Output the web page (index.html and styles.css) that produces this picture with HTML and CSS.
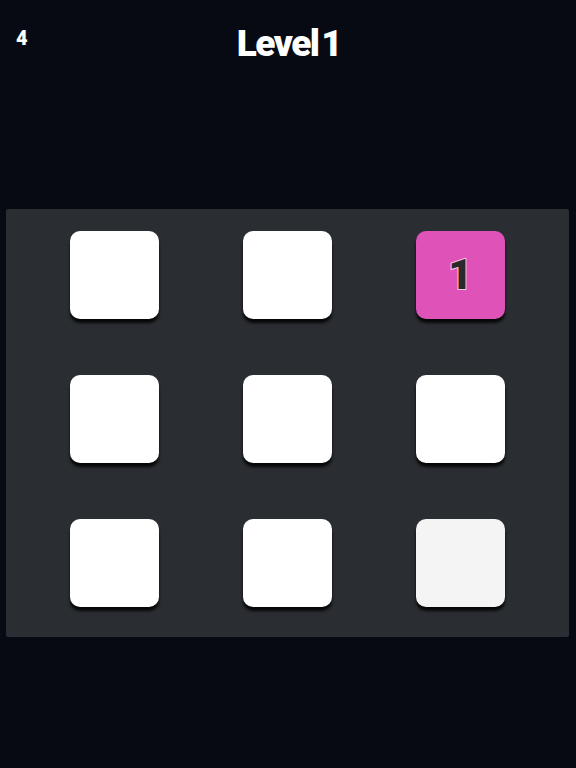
FILE: index.html
```html
<!DOCTYPE html>
<html lang="en">
<head>
    <meta charset="UTF-8">
    <meta name="viewport" content="width=device-width, initial-scale=1.0">
    <title>Level 1</title>
    <link rel="stylesheet" href="styles.css">
</head>
<body>

<div class="top-bar">
    <div class="moves">4</div>
    <h1 class="level-title">Level 1</h1>
</div>

<div class="board">
    <div class="tile"></div>
    <div class="tile"></div>
    <div class="tile tile-active"><span>1</span></div>
    <div class="tile"></div>
    <div class="tile"></div>
    <div class="tile"></div>
    <div class="tile"></div>
    <div class="tile"></div>
    <div class="tile tile-dim"></div>
</div>

</body>
</html>
```

FILE: styles.css
```css
body {
    background-color: #070a12;
    color: #fff;
    font-family: Roboto, "Liberation Sans", sans-serif;
    margin: 0;
    padding: 0;
    width: 576px;
    height: 768px;
    overflow: hidden;
}

.top-bar {
    position: relative;
    height: 209px;
}

.moves {
    position: absolute;
    top: 26px;
    left: 16px;
    font-size: 20px;
    font-weight: 900;
}

.level-title {
    margin: 0;
    padding-top: 22px;
    padding-left: 2px;
    text-align: center;
    font-size: 37px;
    font-weight: 900;
    letter-spacing: -1.5px;
    word-spacing: -5px;
    line-height: 44px;
}

.board {
    margin: 0 7px 0 6px;
    height: 428px;
    box-sizing: border-box;
    background-color: #2a2d32;
    border-radius: 2px;
    padding: 22px 22px 0;
    display: grid;
    grid-template-columns: repeat(3, 173px);
    grid-auto-rows: 88px;
    row-gap: 56px;
}

.tile {
    justify-self: center;
    width: 89px;
    height: 88px;
    background-color: #fff;
    border-radius: 10px;
    box-shadow: 0 4px 3px rgba(0, 0, 0, 0.85);
    display: flex;
    justify-content: center;
    align-items: center;
}

.tile-active {
    background-color: #df53b9;
}

.tile-active span {
    color: #2a2a2c;
    font-size: 42px;
    font-weight: 900;
    line-height: 1;
    -webkit-text-stroke: 2px #f3c6e6;
    paint-order: stroke fill;
}

.tile-dim {
    background-color: #f4f4f4;
}
```
